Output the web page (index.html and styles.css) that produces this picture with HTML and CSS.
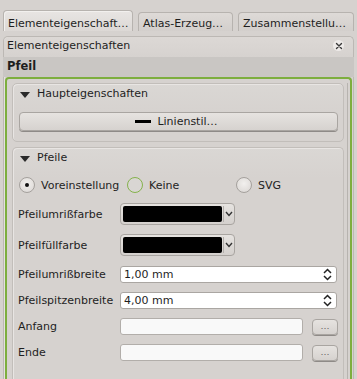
FILE: index.html
```html
<!DOCTYPE html>
<html>
<head>
<meta charset="utf-8">
<link rel="stylesheet" href="styles.css">
</head>
<body>
<div class="tabs">
  <div class="tab active t1">Elementeigenschaft…</div>
  <div class="tab t2">Atlas-Erzeug…</div>
  <div class="tab t3">Zusammenstellu…</div>
</div>
<div class="dock">
  <div class="dock-title">
    <span>Elementeigenschaften</span>
    <span class="close"><svg width="8" height="8" viewBox="0 0 8 8"><path d="M1.5 1.5 L6.5 6.5 M6.5 1.5 L1.5 6.5" stroke="#3a3a3a" stroke-width="1.4" stroke-linecap="round"/></svg></span>
  </div>
  <div class="item-title">Pfeil</div>
  <div class="scroll">
    <div class="group g1">
      <div class="ghead"><span class="tri"></span><span>Haupteigenschaften</span></div>
      <div class="btn linestyle"><span class="lineicon"></span><span>Linienstil…</span></div>
    </div>
    <div class="group g2">
      <div class="ghead"><span class="tri"></span><span>Pfeile</span></div>
      <div class="radios">
        <div class="radio r1"><span class="circle checked"></span><span>Voreinstellung</span></div>
        <div class="radio r2"><span class="circle hover"></span><span>Keine</span></div>
        <div class="radio r3"><span class="circle"></span><span>SVG</span></div>
      </div>
      <div class="row rc1"><span class="lbl">Pfeilumrißfarbe</span><div class="colorbtn"><span class="swatch"></span><span class="drop"><svg width="8" height="6" viewBox="0 0 8 6"><path d="M1 1 L4 4.5 L7 1" fill="none" stroke="#333" stroke-width="1.4"/></svg></span></div></div>
      <div class="row rc2"><span class="lbl">Pfeilfüllfarbe</span><div class="colorbtn"><span class="swatch"></span><span class="drop"><svg width="8" height="6" viewBox="0 0 8 6"><path d="M1 1 L4 4.5 L7 1" fill="none" stroke="#333" stroke-width="1.4"/></svg></span></div></div>
      <div class="row rs1"><span class="lbl">Pfeilumrißbreite</span><div class="spin"><span>1,00 mm</span><svg width="9" height="13" viewBox="0 0 9 13"><path d="M1 5 L4.5 1.5 L8 5 M1 8 L4.5 11.5 L8 8" fill="none" stroke="#222" stroke-width="1.5"/></svg></div></div>
      <div class="row rs2"><span class="lbl">Pfeilspitzenbreite</span><div class="spin"><span>4,00 mm</span><svg width="9" height="13" viewBox="0 0 9 13"><path d="M1 5 L4.5 1.5 L8 5 M1 8 L4.5 11.5 L8 8" fill="none" stroke="#222" stroke-width="1.5"/></svg></div></div>
      <div class="row rl1"><span class="lbl">Anfang</span><div class="edit"></div><div class="btn dots">…</div></div>
      <div class="row rl2"><span class="lbl">Ende</span><div class="edit"></div><div class="btn dots">…</div></div>
    </div>
  </div>
</div>
</body>
</html>
```
FILE: styles.css
```css
* { box-sizing: border-box; }
html, body { margin: 0; padding: 0; }
body {
  width: 357px;
  height: 379px;
  overflow: hidden;
  background: #d6d2cf;
  font-family: "DejaVu Sans", sans-serif;
  font-size: 11px;
  color: #1e1e1e;
}
.tabs {
  display: flex;
  align-items: flex-end;
  gap: 5px;
  padding-left: 3px;
  height: 31px;
}
.tab {
  height: 19px;
  border: 1px solid #b7b3af;
  border-bottom: none;
  border-radius: 4px 4px 0 0;
  background: linear-gradient(#dedad7, #d3cfcc);
  padding: 4px 0 0 4px;
  white-space: nowrap;
  overflow: hidden;
}
.tab.active {
  height: 21px;
  background: linear-gradient(#e8e5e3, #dcd8d5);
  padding-top: 6px;
  box-shadow: inset 1px 1px 0 #f2f0ee;
}
.t1 { width: 130px; }
.t2 { width: 95px; }
.t3 { width: 116px; }
.dock {
  margin: 5px 0 0 3px;
  width: 351px;
  height: 343px;
  border: 1px solid #bcb8b4;
  border-bottom: none;
  border-radius: 5px 5px 0 0;
  box-shadow: inset 1px 1px 0 #e4e1de;
}
.dock-title {
  height: 20px;
  display: flex;
  align-items: center;
  justify-content: space-between;
  padding: 0 9px 3px 3px;
  background: linear-gradient(#dcd8d5, #d6d2cf);
  border-radius: 5px 5px 0 0;
}
.close {
  width: 11px;
  height: 11px;
  border-radius: 6px;
  background: #eeebe9;
  display: flex;
  align-items: center;
  justify-content: center;
}
.item-title {
  height: 20px;
  background: #c9c6c3;
  font-weight: bold;
  padding: 2px 0 0 4px;
  margin: 0 -1px;
  font-size: 11.5px;
}
.scroll {
  margin-left: 1px;
  width: 347px;
  height: 310px;
  border: 2px solid #7dae3e;
  border-bottom: none;
  border-radius: 4px 4px 0 0;
  padding: 4px 0 0 5px;
  position: relative;
}
.scroll::after {
  content: "";
  position: absolute;
  right: 2px;
  top: 4px;
  bottom: 0;
  width: 1px;
  background: #b7b3af;
}
.group {
  width: 332px;
  border: 1px solid #c2beba;
  border-radius: 5px;
  background: linear-gradient(#dad7d4, #d6d2cf 30px);
  box-shadow: inset 1px 1px 0 #e8e5e3;
}
.g1 { height: 59px; }
.g2 { margin-top: 5px; height: 240px; border-bottom: none; border-radius: 5px 5px 0 0; }
.ghead {
  height: 18px;
  display: flex;
  align-items: center;
  padding-left: 7px;
  gap: 7px;
}
.tri {
  width: 0;
  height: 0;
  border-left: 5px solid transparent;
  border-right: 5px solid transparent;
  border-top: 6px solid #2a2a2a;
  margin-top: 4px;
}
.btn {
  border: 1px solid #a9a5a1;
  border-radius: 4px;
  background: linear-gradient(#e6e3e0, #d6d2cf);
  box-shadow: 0 1px 0 #8e8a87;
  display: flex;
  align-items: center;
}
.linestyle {
  margin: 10px 0 0 6px;
  width: 319px;
  height: 19px;
  justify-content: center;
  gap: 6px;
  padding-right: 4px;
}
.lineicon {
  width: 16px;
  height: 3px;
  background: #000;
}
.radios {
  position: relative;
  height: 26px;
  margin-top: 11px;
}
.radio {
  position: absolute;
  top: 0;
  display: flex;
  align-items: center;
  gap: 6px;
  height: 16px;
}
.r1 { left: 6px; }
.r2 { left: 114px; }
.r3 { left: 223px; }
.circle {
  width: 16px;
  height: 16px;
  border-radius: 50%;
  border: 1px solid #a5a19d;
  background: radial-gradient(circle at 50% 40%, #f2f0ee, #d9d5d2);
  display: flex;
  align-items: center;
  justify-content: center;
}
.circle.checked::after {
  content: "";
  width: 4px;
  height: 4px;
  border-radius: 50%;
  background: #111;
}
.circle.hover {
  border: 1.5px solid #85b24c;
  background: #d9d6d3;
}
.row {
  display: flex;
  align-items: center;
  padding-left: 5px;
}
.lbl { width: 102px; }
.rc1 { height: 22px; margin-top: 0; }
.rc2 { height: 22px; margin-top: 9px; }
.rs1 { height: 17px; margin-top: 10px; }
.rs2 { height: 17px; margin-top: 9px; }
.rl1 { height: 17px; margin-top: 9px; }
.rl2 { height: 17px; margin-top: 9px; }
.colorbtn {
  width: 115px;
  height: 22px;
  border: 1px solid #a9a5a1;
  border-radius: 4px;
  background: linear-gradient(#e6e3e0, #d4d0cd);
  display: flex;
  align-items: stretch;
  padding: 2px 0 2px 2px;
}
.swatch {
  width: 99px;
  background: #000;
  border-radius: 2px;
}
.drop {
  flex: 1;
  border-left: 1px solid #b3afab;
  margin-left: 1px;
  display: flex;
  align-items: center;
  justify-content: center;
}
.spin {
  width: 217px;
  height: 17px;
  background: #fff;
  border: 1px solid #aaa6a2;
  border-radius: 3px;
  display: flex;
  align-items: center;
  justify-content: space-between;
  padding: 0 4px 0 3px;
}
.edit {
  width: 183px;
  height: 17px;
  background: #f9f9f9;
  border: 1px solid #b2aeaa;
  border-radius: 3px;
}
.dots {
  margin-left: 9px;
  width: 26px;
  height: 16px;
  justify-content: center;
  color: #6a6866;
  font-size: 9px;
  padding-bottom: 1px;
}
```
